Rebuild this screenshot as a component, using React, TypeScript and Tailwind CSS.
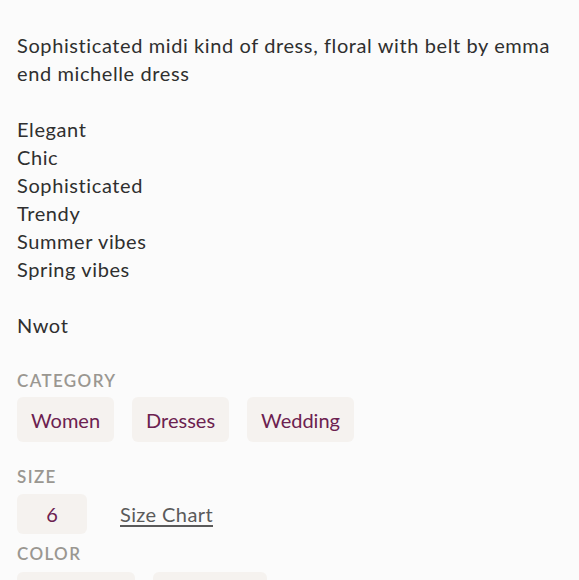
export default function App() {
    const description =
        'Sophisticated midi kind of dress, floral with belt by emma end michelle dress\n\nElegant\nChic\nSophisticated\nTrendy\nSummer vibes\nSpring vibes\n\nNwot';

    return (
        <div
            className="h-screen overflow-hidden bg-[#fbfbfb] px-[17px] pt-[31px] text-[#2f2f2f]"
            style={{ fontFamily: 'Lato, "Noto Sans", sans-serif' }}
        >
            <p className="whitespace-pre-line text-[20px] leading-[28px] tracking-[0.03em]">{description}</p>

            <div className="mt-[32px]">
                <h3 className="text-[17px] font-semibold uppercase leading-[20px] tracking-[0.08em] text-[#9a9791]">
                    Category
                </h3>
                <div className="mt-[6px] flex gap-[18px]">
                    {['Women', 'Dresses', 'Wedding'].map((c) => (
                        <span
                            key={c}
                            className="flex h-[45px] items-center rounded-[6px] bg-[#f5f2ef] px-[14px] text-[20px] text-[#6c2150]"
                        >
                            {c}
                        </span>
                    ))}
                </div>
            </div>

            <div className="mt-[25px]">
                <h3 className="text-[17px] font-semibold uppercase leading-[20px] tracking-[0.08em] text-[#9a9791]">
                    Size
                </h3>
                <div className="mt-[7px] flex items-center gap-[33px]">
                    <span className="flex h-[40px] w-[70px] items-center justify-center rounded-[6px] bg-[#f5f2ef] text-[20px] text-[#6c2150]">
                        6
                    </span>
                    <a
                        href="#"
                        className="text-[20px] tracking-[0.02em] text-[#5a5a5a] underline underline-offset-[3px]"
                    >
                        Size Chart
                    </a>
                </div>
            </div>

            <div className="mt-[10px]">
                <h3 className="text-[17px] font-semibold uppercase leading-[20px] tracking-[0.08em] text-[#9a9791]">
                    Color
                </h3>
                <div className="mt-[8px] flex gap-[18px]">
                    <span className="h-[40px] w-[118px] rounded-[6px] bg-[#f5f2ef]" />
                    <span className="h-[40px] w-[114px] rounded-[6px] bg-[#f5f2ef]" />
                </div>
            </div>
        </div>
    );
}
